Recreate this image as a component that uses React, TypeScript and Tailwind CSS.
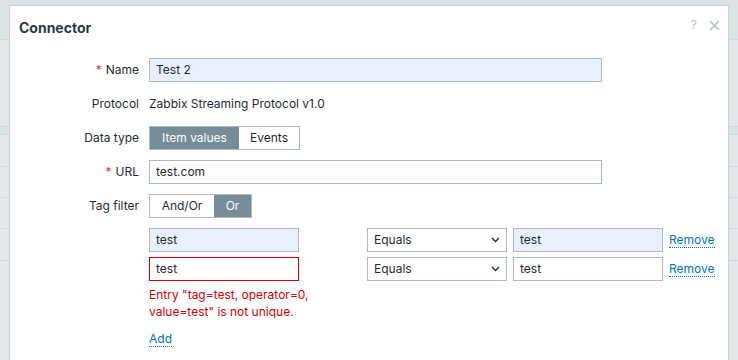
import React from 'react'

const font = { fontFamily: 'Inter, "Noto Sans", sans-serif' }

const Label = ({ children, required }: { children: React.ReactNode; required?: boolean }) => (
  <div className="flex h-6 items-center justify-end text-[12px] text-[#1f2c33]">
    {required && <span className="mr-1 text-[#e33734]">*</span>}
    {children}
  </div>
)

const Chevron = () => (
  <svg width="9" height="6" viewBox="0 0 9 6" className="text-[#1f2c33]">
    <path d="M1 1l3.5 3.5L8 1" fill="none" stroke="currentColor" strokeWidth="1.4" />
  </svg>
)

const TextBox = ({ value, className }: { value: string; className: string }) => (
  <div className={`flex h-6 items-center border px-[6px] text-[12px] text-[#1f2c33] ${className}`}>{value}</div>
)

const TagRow = ({ filled, error }: { filled?: boolean; error?: boolean }) => (
  <div className="flex h-6 items-center">
    <TextBox
      value="test"
      className={`w-[150px] ${error ? 'border-[#d40000] bg-white' : 'border-[#acbbc2]'} ${filled ? 'bg-[#e8f0fe]' : ''}`}
    />
    <div className="ml-[68px] flex h-6 w-[140px] items-center justify-between border border-[#acbbc2] bg-white pl-[6px] pr-[6px] text-[12px] text-[#1f2c33]">
      Equals
      <Chevron />
    </div>
    <TextBox value="test" className={`ml-[6px] w-[150px] border-[#acbbc2] ${filled ? 'bg-[#e8f0fe]' : 'bg-white'}`} />
    <a className="ml-[6px] border-b border-dotted border-[#0275b8] text-[12px] leading-[14px] text-[#0275b8]" href="#">
      Remove
    </a>
  </div>
)

export default function App() {
  return (
    <div className="relative h-[360px] w-[738px] overflow-hidden bg-[#e4e8ea]" style={font}>
      {/* page behind the overlay */}
      <div className="flex flex-col">
        <div className="h-[40px] border-b border-[#d3d9dc] bg-[#dde2e4]" />
        <div className="h-[86px]" />
        <div className="h-[9px] border-y border-[#d3d9dc] bg-[#dde2e4]" />
        <div className="h-[32px] border-b border-[#d3d9dc]" />
        <div className="h-[31px] border-b border-[#d3d9dc]" />
        <div className="h-[31px] border-b border-[#d3d9dc]" />
        <div className="h-[32px] border-b border-[#cfd5d8]" />
        <div className="flex-1 bg-[#dfe3e5]" />
      </div>

      {/* dialog */}
      <div className="absolute left-[9px] top-[5px] h-[400px] w-[720px] border border-[#cbd3d7] bg-white">
        <div className="flex items-start justify-between pl-[9px] pr-[8px] pt-[12px]">
          <h1 className="text-[14px] font-bold leading-5 text-[#2a3b45]">Connector</h1>
          <div className="flex items-center gap-[12px] pt-[1px] text-[#b6c1c6]">
            <span className="text-[12px] leading-none">?</span>
            <svg width="11" height="11" viewBox="0 0 11 11">
              <path d="M1 1l9 9M10 1l-9 9" stroke="currentColor" strokeWidth="1.6" />
            </svg>
          </div>
        </div>

        <div className="mt-[20px] grid grid-cols-[129px_1fr] gap-x-[10px] gap-y-[10px]">
          <Label required>Name</Label>
          <TextBox value="Test 2" className="w-[453px] border-[#acbbc2] bg-[#e8f0fe]" />

          <Label>Protocol</Label>
          <div className="flex h-6 items-center text-[12px] text-[#1f2c33]">Zabbix Streaming Protocol v1.0</div>

          <Label>Data type</Label>
          <div className="flex h-[24px] w-fit border border-[#acbbc2] text-[12px]">
            <span className="flex w-[89px] items-center justify-center bg-[#768d99] text-white">Item values</span>
            <span className="flex w-[60px] items-center justify-center bg-white text-[#1f2c33]">Events</span>
          </div>

          <Label required>URL</Label>
          <TextBox value="test.com" className="w-[453px] border-[#acbbc2] bg-white" />

          <Label>Tag filter</Label>
          <div className="flex h-[24px] w-fit border border-[#acbbc2] text-[12px]">
            <span className="flex w-[64px] items-center justify-center bg-white text-[#1f2c33]">And/Or</span>
            <span className="flex w-[37px] items-center justify-center bg-[#768d99] text-white">Or</span>
          </div>

          <div />
          <div className="flex flex-col gap-[5px]">
            <TagRow filled />
            <TagRow error />
            <p className="text-[12px] leading-[17px] text-[#d40000]">
              Entry "tag=test, operator=0,
              <br />
              value=test" is not unique.
            </p>
            <div>
              <a className="border-b border-dotted border-[#0275b8] text-[12px] leading-[14px] text-[#0275b8]" href="#">
                Add
              </a>
            </div>
          </div>
        </div>
      </div>
    </div>
  )
}
